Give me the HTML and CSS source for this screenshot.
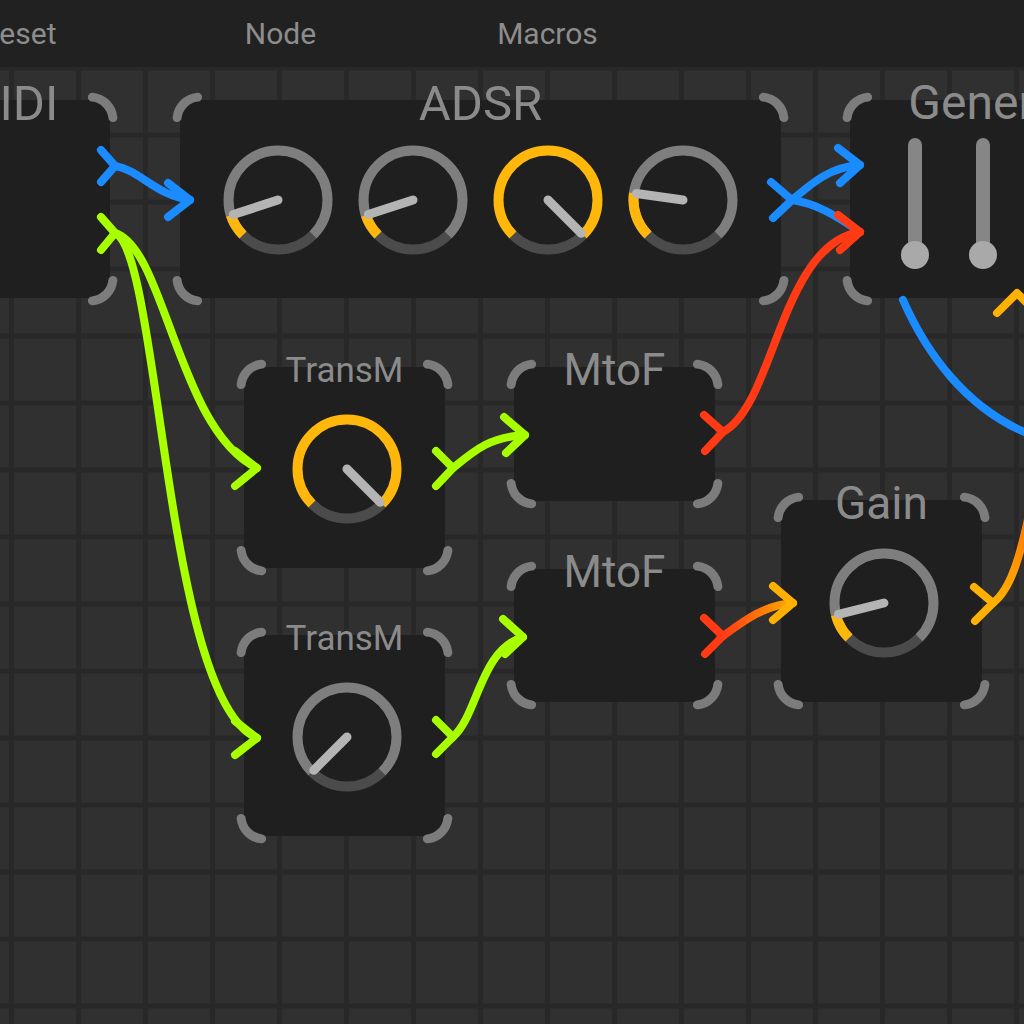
FILE: index.html
```html
<!DOCTYPE html>
<html lang="en">
<head>
<meta charset="utf-8">
<title>Patch editor</title>
<link rel="stylesheet" href="styles.css">
</head>
<body>
<div class="app">
  <header class="menubar">
    <nav class="menu">
      <span class="menu-item">Preset</span>
      <span class="menu-item">Node</span>
      <span class="menu-item">Macros</span>
    </nav>
  </header>

  <main class="canvas">

    <!-- MIDI -->
    <section class="node n-midi">
      <div class="title t-big">MIDI</div>
      <svg class="corner tl" viewBox="0 0 36 36"><path d="M5.13 25.6A23 23 0 0 1 25.6 5.13"/></svg>
      <svg class="corner tr" viewBox="0 0 36 36"><path d="M5.13 25.6A23 23 0 0 1 25.6 5.13"/></svg>
      <svg class="corner bl" viewBox="0 0 36 36"><path d="M5.13 25.6A23 23 0 0 1 25.6 5.13"/></svg>
      <svg class="corner br" viewBox="0 0 36 36"><path d="M5.13 25.6A23 23 0 0 1 25.6 5.13"/></svg>
    </section>

    <!-- ADSR -->
    <section class="node n-adsr">
      <div class="title t-big">ADSR</div>
      <svg class="corner tl" viewBox="0 0 36 36"><path d="M5.13 25.6A23 23 0 0 1 25.6 5.13"/></svg>
      <svg class="corner tr" viewBox="0 0 36 36"><path d="M5.13 25.6A23 23 0 0 1 25.6 5.13"/></svg>
      <svg class="corner bl" viewBox="0 0 36 36"><path d="M5.13 25.6A23 23 0 0 1 25.6 5.13"/></svg>
      <svg class="corner br" viewBox="0 0 36 36"><path d="M5.13 25.6A23 23 0 0 1 25.6 5.13"/></svg>
      <div class="content knobs">
        <svg class="knob" viewBox="0 0 110 110">
          <path class="k-dark" d="M90 90A49.5 49.5 0 0 1 20 90"/>
          <path class="k-track" d="M20 90A49.5 49.5 0 1 1 90 90"/>
          <path class="k-val" d="M20 90A49.5 49.5 0 0 1 7.92 70.3"/>
          <line class="k-ptr" x1="55" y1="55" x2="10.3" y2="69.52"/>
        </svg>
        <svg class="knob" viewBox="0 0 110 110">
          <path class="k-dark" d="M90 90A49.5 49.5 0 0 1 20 90"/>
          <path class="k-track" d="M20 90A49.5 49.5 0 1 1 90 90"/>
          <path class="k-val" d="M20 90A49.5 49.5 0 0 1 7.92 70.3"/>
          <line class="k-ptr" x1="55" y1="55" x2="10.3" y2="69.52"/>
        </svg>
        <svg class="knob" viewBox="0 0 110 110">
          <path class="k-dark" d="M90 90A49.5 49.5 0 0 1 20 90"/>
          <path class="k-val" d="M20 90A49.5 49.5 0 1 1 90 90"/>
          <line class="k-ptr" x1="55" y1="55" x2="88.23" y2="88.23"/>
        </svg>
        <svg class="knob" viewBox="0 0 110 110">
          <path class="k-dark" d="M90 90A49.5 49.5 0 0 1 20 90"/>
          <path class="k-track" d="M20 90A49.5 49.5 0 1 1 90 90"/>
          <path class="k-val" d="M20 90A49.5 49.5 0 0 1 5.98 48.11"/>
          <line class="k-ptr" x1="55" y1="55" x2="8.46" y2="48.46"/>
        </svg>
      </div>
    </section>

    <!-- Generator -->
    <section class="node n-gen">
      <div class="title t-gen">Generator</div>
      <svg class="corner tl" viewBox="0 0 36 36"><path d="M5.13 25.6A23 23 0 0 1 25.6 5.13"/></svg>
      <svg class="corner tr" viewBox="0 0 36 36"><path d="M5.13 25.6A23 23 0 0 1 25.6 5.13"/></svg>
      <svg class="corner bl" viewBox="0 0 36 36"><path d="M5.13 25.6A23 23 0 0 1 25.6 5.13"/></svg>
      <svg class="corner br" viewBox="0 0 36 36"><path d="M5.13 25.6A23 23 0 0 1 25.6 5.13"/></svg>
      <div class="sliders">
        <div class="slider"></div>
        <div class="slider"></div>
        <div class="slider"></div>
      </div>
    </section>

    <!-- TransM 1 -->
    <section class="node n-trans1">
      <div class="title t-small">TransM</div>
      <svg class="corner tl" viewBox="0 0 36 36"><path d="M5.13 25.6A23 23 0 0 1 25.6 5.13"/></svg>
      <svg class="corner tr" viewBox="0 0 36 36"><path d="M5.13 25.6A23 23 0 0 1 25.6 5.13"/></svg>
      <svg class="corner bl" viewBox="0 0 36 36"><path d="M5.13 25.6A23 23 0 0 1 25.6 5.13"/></svg>
      <svg class="corner br" viewBox="0 0 36 36"><path d="M5.13 25.6A23 23 0 0 1 25.6 5.13"/></svg>
      <div class="content single">
        <svg class="knob" viewBox="0 0 110 110">
          <path class="k-dark" d="M90 90A49.5 49.5 0 0 1 20 90"/>
          <path class="k-val" d="M20 90A49.5 49.5 0 1 1 90 90"/>
          <line class="k-ptr" x1="55" y1="55" x2="88.23" y2="88.23"/>
        </svg>
      </div>
    </section>

    <!-- TransM 2 -->
    <section class="node n-trans2">
      <div class="title t-small">TransM</div>
      <svg class="corner tl" viewBox="0 0 36 36"><path d="M5.13 25.6A23 23 0 0 1 25.6 5.13"/></svg>
      <svg class="corner tr" viewBox="0 0 36 36"><path d="M5.13 25.6A23 23 0 0 1 25.6 5.13"/></svg>
      <svg class="corner bl" viewBox="0 0 36 36"><path d="M5.13 25.6A23 23 0 0 1 25.6 5.13"/></svg>
      <svg class="corner br" viewBox="0 0 36 36"><path d="M5.13 25.6A23 23 0 0 1 25.6 5.13"/></svg>
      <div class="content single">
        <svg class="knob" viewBox="0 0 110 110">
          <path class="k-dark" d="M90 90A49.5 49.5 0 0 1 20 90"/>
          <path class="k-track" d="M20 90A49.5 49.5 0 1 1 90 90"/>
          <line class="k-ptr" x1="55" y1="55" x2="21.77" y2="88.23"/>
        </svg>
      </div>
    </section>

    <!-- MtoF 1 -->
    <section class="node n-mtof1">
      <div class="title t-mid">MtoF</div>
      <svg class="corner tl" viewBox="0 0 36 36"><path d="M5.13 25.6A23 23 0 0 1 25.6 5.13"/></svg>
      <svg class="corner tr" viewBox="0 0 36 36"><path d="M5.13 25.6A23 23 0 0 1 25.6 5.13"/></svg>
      <svg class="corner bl" viewBox="0 0 36 36"><path d="M5.13 25.6A23 23 0 0 1 25.6 5.13"/></svg>
      <svg class="corner br" viewBox="0 0 36 36"><path d="M5.13 25.6A23 23 0 0 1 25.6 5.13"/></svg>
    </section>

    <!-- MtoF 2 -->
    <section class="node n-mtof2">
      <div class="title t-mid">MtoF</div>
      <svg class="corner tl" viewBox="0 0 36 36"><path d="M5.13 25.6A23 23 0 0 1 25.6 5.13"/></svg>
      <svg class="corner tr" viewBox="0 0 36 36"><path d="M5.13 25.6A23 23 0 0 1 25.6 5.13"/></svg>
      <svg class="corner bl" viewBox="0 0 36 36"><path d="M5.13 25.6A23 23 0 0 1 25.6 5.13"/></svg>
      <svg class="corner br" viewBox="0 0 36 36"><path d="M5.13 25.6A23 23 0 0 1 25.6 5.13"/></svg>
    </section>

    <!-- Gain -->
    <section class="node n-gain">
      <div class="title t-gain">Gain</div>
      <svg class="corner tl" viewBox="0 0 36 36"><path d="M5.13 25.6A23 23 0 0 1 25.6 5.13"/></svg>
      <svg class="corner tr" viewBox="0 0 36 36"><path d="M5.13 25.6A23 23 0 0 1 25.6 5.13"/></svg>
      <svg class="corner bl" viewBox="0 0 36 36"><path d="M5.13 25.6A23 23 0 0 1 25.6 5.13"/></svg>
      <svg class="corner br" viewBox="0 0 36 36"><path d="M5.13 25.6A23 23 0 0 1 25.6 5.13"/></svg>
      <div class="content single">
        <svg class="knob" viewBox="0 0 110 110">
          <path class="k-dark" d="M90 90A49.5 49.5 0 0 1 20 90"/>
          <path class="k-track" d="M20 90A49.5 49.5 0 1 1 90 90"/>
          <path class="k-val" d="M20 90A49.5 49.5 0 0 1 6.97 66.98"/>
          <line class="k-ptr" x1="55" y1="55" x2="9.4" y2="66.37"/>
        </svg>
      </div>
    </section>

    <!-- Wires -->
    <svg class="wires" viewBox="0 67 1024 957">
      <defs>
        <linearGradient id="g-red-yel" gradientUnits="userSpaceOnUse" x1="723" y1="0" x2="793" y2="0">
          <stop offset="0" stop-color="#ff3a14"/>
          <stop offset="0.55" stop-color="#ff7a08"/>
          <stop offset="1" stop-color="#ffae00"/>
        </linearGradient>
        <linearGradient id="g-yel-org" gradientUnits="userSpaceOnUse" x1="0" y1="603" x2="0" y2="500">
          <stop offset="0" stop-color="#ffb000"/>
          <stop offset="1" stop-color="#ff6a08"/>
        </linearGradient>
      </defs>

      <!-- blue -->
      <g class="w-blue">
        <path d="M101 150L115 166L101 182"/>
        <path d="M115 166C140 170 155 195 190 200"/>
        <path d="M168 183L190 200L168 217"/>
        <path d="M771 182L792 200L773 218"/>
        <path d="M792 200C812 183 830 167 860 165"/>
        <path d="M792 200C815 203 835 215 860 232"/>
        <path d="M838 148L860 165L840 183"/>
        <path d="M903 300C925 350 965 410 1034 436"/>
      </g>

      <!-- green -->
      <g class="w-green">
        <path d="M101 217L115 233L101 250"/>
        <path d="M115 233C165 248 178 430 257 468"/>
        <path d="M115 233C160 252 165 700 257 738"/>
        <path d="M235 451L257 468L235 486"/>
        <path d="M235 721L257 738L235 755"/>
        <path d="M436 451L453 468L436 486"/>
        <path d="M453 468C475 450 490 437 525 435"/>
        <path d="M504 417L525 435L506 453"/>
        <path d="M436 720L453 737L436 754"/>
        <path d="M453 737C478 715 480 650 523 637"/>
        <path d="M503 619L523 637L505 654"/>
      </g>

      <!-- red -->
      <g class="w-red">
        <path d="M704 415L723 432L705 451"/>
        <path d="M723 432C775 405 780 245 860 232"/>
        <path d="M838 215L860 232L840 250"/>
        <path d="M704 618L723 636L705 654"/>
      </g>
      <path class="w-grad1" d="M723 636C745 620 765 605 793 603"/>

      <!-- yellow -->
      <g class="w-yellow">
        <path d="M773 586L793 603L773 620"/>
        <path d="M974 587L993 603L975 621"/>
        <path d="M997 313L1017 293L1037 313"/>
      </g>
      <path class="w-grad2" d="M993 603C1010 590 1020 560 1032 500"/>
    </svg>
  </main>
</div>
</body>
</html>
```

FILE: styles.css
```css
* { box-sizing: border-box; }

html, body {
  margin: 0;
  padding: 0;
  background: #303030;
  font-family: Roboto, "Noto Sans", "DejaVu Sans", sans-serif;
  overflow: hidden;
}

.app {
  width: 1024px;
  height: 1024px;
  overflow: hidden;
  display: flex;
  flex-direction: column;
}

/* ---------- top menu bar ---------- */
.menubar {
  flex: none;
  height: 67px;
  background: #212121;
  display: flex;
  align-items: center;
  overflow: hidden;
}

.menu {
  display: flex;
  margin-left: -120px;
}

.menu-item {
  width: 267px;
  text-align: center;
  font-size: 30px;
  line-height: 1;
  color: #8d8d8d;
}

/* ---------- canvas with grid ---------- */
.canvas {
  position: relative;
  flex: 1;
  overflow: hidden;
  background-color: #303030;
  background-image:
    linear-gradient(90deg, #282828 0 5px, transparent 5px),
    linear-gradient(180deg, #282828 0 5px, transparent 5px);
  background-size: 67px 67px;
  background-position: 9px -1.5px;
}

/* ---------- nodes ---------- */
.node {
  position: absolute;
  background: #1f1f1f;
  border-radius: 20px;
}

.n-midi   { left: -95px; top: 33px;  width: 205px; height: 198px; }
.n-adsr   { left: 180px; top: 33px;  width: 601px; height: 198px; }
.n-gen    { left: 850px; top: 33px;  width: 327px; height: 198px; }
.n-trans1 { left: 244px; top: 300px; width: 201px; height: 201px; }
.n-trans2 { left: 244px; top: 568px; width: 201px; height: 201px; }
.n-mtof1  { left: 514px; top: 300px; width: 201px; height: 134px; }
.n-mtof2  { left: 514px; top: 502px; width: 201px; height: 133px; }
.n-gain   { left: 781px; top: 433px; width: 201px; height: 202px; }

.title {
  position: absolute;
  left: -60px;
  right: -60px;
  top: 3px;
  transform: translateY(-50%);
  text-align: center;
  line-height: 1;
  white-space: nowrap;
  color: #8b8b8b;
  z-index: 2;
}

.t-big   { font-size: 49px; }
.t-gen   { font-size: 48px; }
.t-small { font-size: 35px; }
.t-mid   { font-size: 44px; }
.t-gain  { font-size: 46px; }

.corner {
  position: absolute;
  width: 36px;
  height: 36px;
  overflow: visible;
  fill: none;
  stroke: #7c7c7c;
  stroke-width: 9;
  stroke-linecap: round;
  z-index: 1;
}

.corner.tl { left: -8px;  top: -8px; }
.corner.tr { right: -8px; top: -8px;    transform: scaleX(-1); }
.corner.bl { left: -8px;  bottom: -8px; transform: scaleY(-1); }
.corner.br { right: -8px; bottom: -8px; transform: scale(-1, -1); }

/* ---------- knobs ---------- */
.content {
  position: absolute;
  inset: 0;
  display: flex;
  align-items: center;
  justify-content: center;
}

.content.knobs { gap: 25px; padding-top: 2px; }
.content.single { padding: 3px 0 0 4px; }

.knob {
  width: 110px;
  height: 110px;
  flex: none;
  fill: none;
  stroke-width: 10;
}

.k-dark  { stroke: #4b4b4b; }
.k-track { stroke: #7e7e7e; }
.k-val   { stroke: #ffb70c; }
.k-ptr   { stroke: #b4b4b4; stroke-width: 9; stroke-linecap: round; }

/* ---------- sliders ---------- */
.sliders {
  position: absolute;
  inset: 0;
  display: flex;
  gap: 40px;
  padding: 38px 0 0 51px;
}

.slider {
  position: relative;
  width: 28px;
  height: 131px;
  flex: none;
}

.slider::before {
  content: "";
  position: absolute;
  left: 7px;
  top: 0;
  width: 14px;
  height: 117px;
  border-radius: 7px;
  background: #868686;
}

.slider::after {
  content: "";
  position: absolute;
  left: 0;
  bottom: 0;
  width: 28px;
  height: 28px;
  border-radius: 50%;
  background: #a9a9a9;
}

/* ---------- wires ---------- */
.wires {
  position: absolute;
  left: 0;
  top: 0;
  width: 1024px;
  height: 957px;
  overflow: visible;
  pointer-events: none;
  z-index: 5;
  fill: none;
  stroke-width: 8;
  stroke-linecap: round;
  stroke-linejoin: round;
}

.w-blue   { stroke: #1a8cff; }
.w-green  { stroke: #a8ff00; }
.w-red    { stroke: #ff3a14; }
.w-yellow { stroke: #ffb000; }
.w-grad1  { stroke: url(#g-red-yel); }
.w-grad2  { stroke: url(#g-yel-org); }
```
